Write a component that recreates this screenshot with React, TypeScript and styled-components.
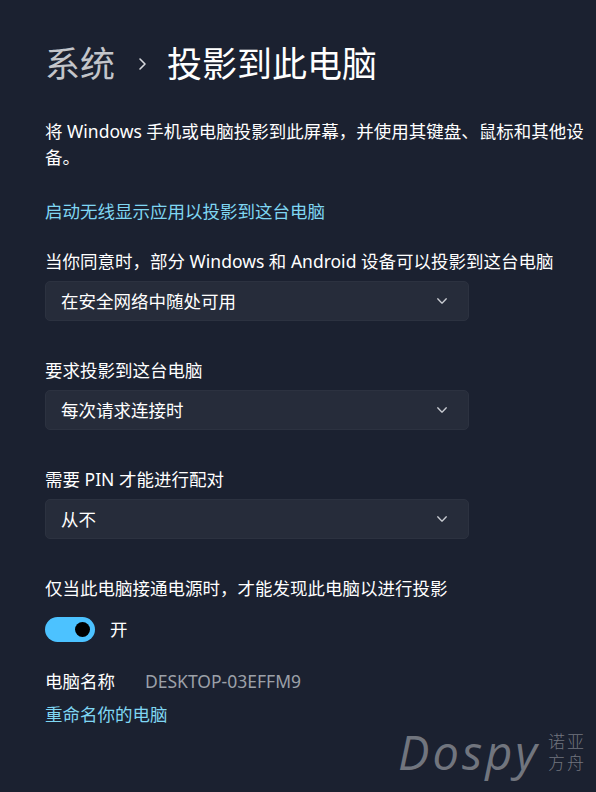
import styled, { createGlobalStyle } from "styled-components"

const GlobalStyle = createGlobalStyle`
  html, body {
    margin: 0;
    padding: 0;
    background: #1b2130;
  }
  body {
    font-family: "Noto Sans", "Noto Sans CJK SC", sans-serif;
    color: #ffffff;
  }
`

const Page = styled.main`
  position: relative;
  width: 596px;
  height: 792px;
  box-sizing: border-box;
  padding: 41px 0 0 45px;
  overflow: hidden;
  background: #1b2130;
`

const Header = styled.h1`
  display: flex;
  align-items: center;
  margin: 0;
  height: 46px;
  font-size: 35px;
  font-weight: 400;
  line-height: 46px;
`

const Crumb = styled.span`
  color: #c3c5ca;
`

const Separator = styled.span`
  display: flex;
  align-items: center;
  margin: 0 17px 0 21px;
`

const Current = styled.span`
  color: #ffffff;
`

const Content = styled.div`
  width: 545px;
  font-size: 17.5px;
  line-height: 26px;
`

const Description = styled.p`
  margin: 31px 0 0;
`

const Link = styled.a<{ $top: number }>`
  display: block;
  margin-top: ${(p) => p.$top}px;
  color: #7fd6f2;
  text-decoration: none;
  cursor: pointer;
`

const Field = styled.section<{ $top: number }>`
  margin-top: ${(p) => p.$top}px;
`

const Label = styled.div`
  height: 26px;
  white-space: nowrap;
`

const Select = styled.button`
  display: flex;
  align-items: center;
  justify-content: space-between;
  width: 424px;
  height: 40px;
  margin-top: 7px;
  padding: 0 20px 0 15px;
  box-sizing: border-box;
  background: #262c3a;
  border: 1px solid #2c3240;
  border-radius: 5px;
  color: #ffffff;
  font: inherit;
  text-align: left;
  cursor: pointer;
`

const ToggleRow = styled.div`
  display: flex;
  align-items: center;
  gap: 15px;
  margin-top: 15px;
`

const Track = styled.div`
  position: relative;
  width: 50px;
  height: 25px;
  border-radius: 13px;
  background: #4cc2ff;
`

const Knob = styled.span`
  position: absolute;
  top: 5px;
  right: 5px;
  width: 15px;
  height: 15px;
  border-radius: 50%;
  background: #000000;
`

const NameRow = styled.div`
  display: flex;
  gap: 30px;
  margin-top: 26px;
`

const NameValue = styled.span`
  color: #9ca0a8;
`

const Watermark = styled.div`
  position: absolute;
  right: 10px;
  bottom: 8px;
  display: flex;
  align-items: center;
  gap: 8px;
  opacity: 0.9;
`

const Brand = styled.span`
  font-family: "Open Sans", "Liberation Sans", sans-serif;
  font-style: italic;
  font-size: 47px;
  letter-spacing: 3px;
  color: #7b7f87;
`

const BrandCn = styled.span`
  display: flex;
  flex-direction: column;
  font-size: 17px;
  line-height: 21px;
  letter-spacing: 2px;
  color: #7b7f87;
  font-weight: 300;
`

function Chevron({ size, color, dir }: { size: number; color: string; dir: "right" | "down" }) {
  const d = dir === "right" ? "M4 2 L9 7 L4 12" : "M2 4.5 L7 9.5 L12 4.5"
  return (
    <svg width={size} height={size} viewBox="0 0 14 14" fill="none">
      <path d={d} stroke={color} strokeWidth="1.6" strokeLinecap="round" strokeLinejoin="round" />
    </svg>
  )
}

function Dropdown({ value }: { value: string }) {
  return (
    <Select>
      <span>{value}</span>
      <Chevron size={12} color="#c9ccd2" dir="down" />
    </Select>
  )
}

export default function App() {
  return (
    <>
      <GlobalStyle />
      <Page>
        <Header>
          <Crumb>系统</Crumb>
          <Separator>
            <Chevron size={14} color="#d6d8dc" dir="right" />
          </Separator>
          <Current>投影到此电脑</Current>
        </Header>

        <Content>
          <Description>
            将 Windows 手机或电脑投影到此屏幕，并使用其键盘、鼠标和其他设备。
          </Description>

          <Link $top={28}>启动无线显示应用以投影到这台电脑</Link>

          <Field $top={24}>
            <Label>当你同意时，部分 Windows 和 Android 设备可以投影到这台电脑</Label>
            <Dropdown value="在安全网络中随处可用" />
          </Field>

          <Field $top={36}>
            <Label>要求投影到这台电脑</Label>
            <Dropdown value="每次请求连接时" />
          </Field>

          <Field $top={36}>
            <Label>需要 PIN 才能进行配对</Label>
            <Dropdown value="从不" />
          </Field>

          <Field $top={36}>
            <Label>仅当此电脑接通电源时，才能发现此电脑以进行投影</Label>
            <ToggleRow>
              <Track>
                <Knob />
              </Track>
              <span>开</span>
            </ToggleRow>
          </Field>

          <NameRow>
            <span>电脑名称</span>
            <NameValue>DESKTOP-03EFFM9</NameValue>
          </NameRow>
          <Link $top={7}>重命名你的电脑</Link>
        </Content>

        <Watermark>
          <Brand>Dospy</Brand>
          <BrandCn>
            <span>诺亚</span>
            <span>方舟</span>
          </BrandCn>
        </Watermark>
      </Page>
    </>
  )
}
